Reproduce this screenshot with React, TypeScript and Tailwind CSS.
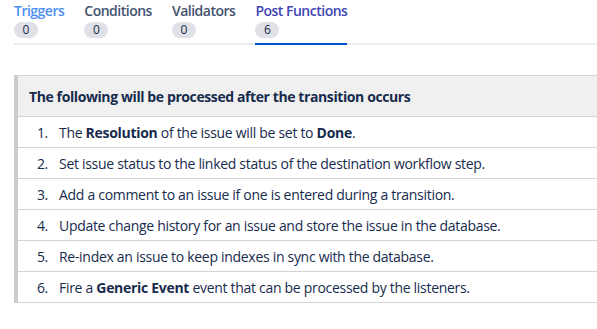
import React from 'react';

const tabs = [
  { label: 'Triggers', count: 0, color: 'text-[#4c8ff0]' },
  { label: 'Conditions', count: 0, color: 'text-[#42526e]' },
  { label: 'Validators', count: 0, color: 'text-[#42526e]' },
  { label: 'Post Functions', count: 6, color: 'text-[#3f45b5]', active: true },
];

const steps: React.ReactNode[] = [
  <>The <b>Resolution</b> of the issue will be set to <b>Done</b>.</>,
  <>Set issue status to the linked status of the destination workflow step.</>,
  <>Add a comment to an issue if one is entered during a transition.</>,
  <>Update change history for an issue and store the issue in the database.</>,
  <>Re-index an issue to keep indexes in sync with the database.</>,
  <>Fire a <b>Generic Event</b> event that can be processed by the listeners.</>,
];

export default function App() {
  return (
    <div
      className="w-[597px] h-[329px] bg-white text-[#172b4d] overflow-hidden"
      style={{ fontFamily: '"Open Sans", "Noto Sans", sans-serif' }}
    >
      <div className="pl-[14px]">
        {/* tabs */}
        <div className="flex border-b-2 border-[#ebecf0] pt-[1px]">
          {tabs.map((t, i) => (
            <div
              key={t.label}
              className={`flex flex-col items-start pb-[5px] -mb-[2px] border-b-2 ${
                i < tabs.length - 1 ? 'mr-[20px]' : ''
              } ${t.active ? 'border-[#0052cc]' : 'border-transparent'}`}
            >
              <span className={`text-[14px] leading-[20px] font-semibold tracking-[-0.5px] ${t.color}`}>
                {t.label}
              </span>
              <span className="mt-[1px] h-[16px] min-w-[24px] px-[8px] rounded-full bg-[#dfe1e6] text-[12px] leading-[16px] text-center text-[#172b4d]">
                {t.count}
              </span>
            </div>
          ))}
        </div>

        {/* panel */}
        <div className="mt-[30px] border-l-4 border-l-[#cccccc] border-t border-t-[#d4d4d4]">
          <div className="h-[41px] bg-[#f0f0f0] flex items-center pl-[11px] border-b border-[#d4d4d4] text-[14px] font-bold tracking-[-0.4px] text-[#172b4d]">
            The following will be processed after the transition occurs
          </div>
          <ol>
            {steps.map((s, i) => (
              <li
                key={i}
                className="h-[31px] flex items-center border-b border-[#d4d4d4] text-[14px] tracking-[-0.3px] text-[#172b4d]"
              >
                <span className="w-[41px] shrink-0 text-right pr-[11px]">{i + 1}.</span>
                <span>{s}</span>
              </li>
            ))}
          </ol>
        </div>
      </div>
    </div>
  );
}
